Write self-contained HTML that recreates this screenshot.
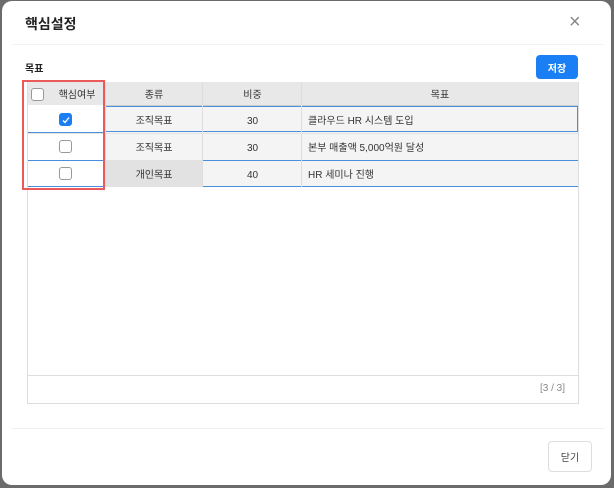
<!DOCTYPE html><html><head><style>
body{margin:0;width:614px;height:488px;background:#6b6b6b;font-family:"Liberation Sans","Noto Sans CJK KR",sans-serif;position:relative;overflow:hidden}
.d{position:absolute;left:2px;top:1px;width:609px;height:484px;background:#fff;border-radius:10px}
.a{position:absolute}
.t{font-size:10px;color:#333;position:absolute;height:27px;display:flex;align-items:center;justify-content:center}
.l{justify-content:flex-start}
.n{padding-top:2px;box-sizing:border-box;height:29px}
.cb{position:absolute;width:11px;height:11px;border:1px solid #999;border-radius:3px;background:#fff}
</style></head><body>
<div class="d"></div>
<div class="a" style="left:25px;top:14px;font-size:14px;font-weight:bold;color:#222">핵심설정</div>
<div class="a" style="left:569px;top:12px;font-size:20px;color:#888;line-height:20px">×</div>
<div class="a" style="left:12px;top:44px;width:592px;height:1px;background:#f2f2f2"></div>
<div class="a" style="left:25px;top:60px;font-size:10px;font-weight:bold;color:#222">목표</div>
<div class="a" style="left:536px;top:55px;width:42px;height:24px;background:#1a7ef5;border-radius:4px;color:#fff;font-size:10px;font-weight:bold;display:flex;align-items:center;justify-content:center">저장</div>
<div class="a" style="left:27px;top:82px;width:550px;height:320px;border:1px solid #ddd;background:#fff"></div>
<div class="a" style="left:28px;top:82px;width:550px;height:23px;background:#e8e8e8;border-bottom:1px solid #ccc"></div>
<div class="a" style="left:28px;top:106px;width:550px;height:81px;background:#f4f4f4"></div>
<div class="a" style="left:28px;top:106px;width:550px;height:26px;border:1px solid #4a8ee0;box-sizing:border-box;background:#f4f4f4"></div>
<div class="a" style="left:28px;top:160px;width:550px;height:27px;border-top:1px solid #4a8ee0;border-bottom:1px solid #4a8ee0;box-sizing:border-box"></div>
<div class="a" style="left:105px;top:160px;width:98px;height:27px;background:#e2e2e2;border-right:1px solid #4a8ee0;box-sizing:border-box"></div>
<div class="a" style="left:28px;top:105px;width:77px;height:81px;background:#fff"></div>
<div class="a" style="left:28px;top:132px;width:77px;height:1px;background:#4a8ee0"></div>
<div class="a" style="left:28px;top:160px;width:77px;height:1px;background:#4a8ee0"></div>
<div class="a" style="left:105px;top:82px;width:1px;height:105px;background:#ddd"></div>
<div class="a" style="left:202px;top:82px;width:1px;height:105px;background:#ddd"></div>
<div class="a" style="left:301px;top:82px;width:1px;height:105px;background:#ddd"></div>
<div class="a" style="left:28px;top:133px;width:550px;height:1px;background:#e4e4e4"></div>
<div class="t" style="left:44px;top:81px;width:66px;height:25px">핵심여부</div>
<div class="t" style="left:105px;top:81px;width:98px;height:25px">종류</div>
<div class="t" style="left:203px;top:81px;width:99px;height:25px">비중</div>
<div class="t" style="left:302px;top:81px;width:276px;height:25px">목표</div>
<div class="cb" style="left:31px;top:88px"></div>
<div class="cb" style="left:59px;top:113px;background:#1a7ef5;border-color:#1a7ef5"></div>
<svg class="a" style="left:60px;top:114px" width="12" height="12"><path d="M3 6.5l2 2 4-5" stroke="#fff" stroke-width="1.4" fill="none"/></svg>
<div class="cb" style="left:59px;top:140px"></div>
<div class="cb" style="left:59px;top:167px"></div>
<div class="t" style="left:105px;top:106px;width:98px">조직목표</div>
<div class="t" style="left:105px;top:133px;width:98px">조직목표</div>
<div class="t" style="left:105px;top:160px;width:98px">개인목표</div>
<div class="t n" style="left:203px;top:106px;width:99px">30</div>
<div class="t n" style="left:203px;top:133px;width:99px">30</div>
<div class="t n" style="left:203px;top:160px;width:99px">40</div>
<div class="t l" style="left:308px;top:106px">클라우드 HR 시스템 도입</div>
<div class="t l" style="left:308px;top:133px">본부 매출액 5,000억원 달성</div>
<div class="t l" style="left:308px;top:160px">HR 세미나 진행</div>
<div class="a" style="left:22px;top:80px;width:79px;height:106px;border:2px solid #ea5a5a"></div>
<div class="a" style="left:28px;top:375px;width:550px;height:1px;background:#ddd"></div>
<div class="a" style="left:540px;top:383px;font-size:10px;color:#888">[3 / 3]</div>
<div class="a" style="left:12px;top:428px;width:592px;height:1px;background:#f0f0f0"></div>
<div class="a" style="left:548px;top:441px;width:44px;height:31px;border:1px solid #ddd;border-radius:4px;box-sizing:border-box;font-size:10px;color:#444;display:flex;align-items:center;justify-content:center">닫기</div>
</body></html>
